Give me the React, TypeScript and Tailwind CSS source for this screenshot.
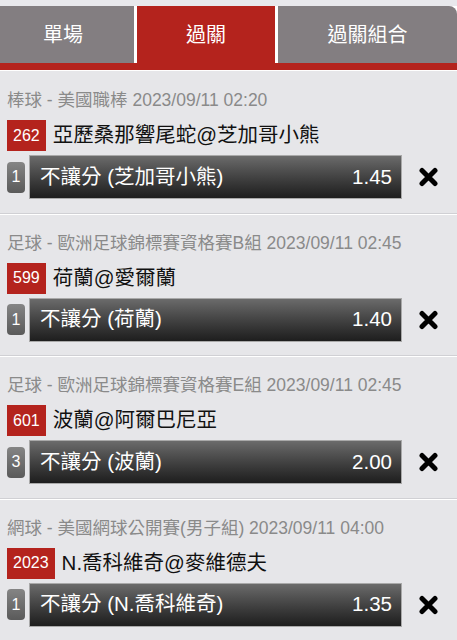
const font = { fontFamily: '"Liberation Sans", "Noto Sans CJK TC", sans-serif' };

const bets = [
  { league: "棒球 - 美國職棒 2023/09/11 02:20", code: "262", match: "亞歷桑那響尾蛇@芝加哥小熊", count: "1", pick: "不讓分 (芝加哥小熊)", odds: "1.45" },
  { league: "足球 - 歐洲足球錦標賽資格賽B組 2023/09/11 02:45", code: "599", match: "荷蘭@愛爾蘭", count: "1", pick: "不讓分 (荷蘭)", odds: "1.40" },
  { league: "足球 - 歐洲足球錦標賽資格賽E組 2023/09/11 02:45", code: "601", match: "波蘭@阿爾巴尼亞", count: "3", pick: "不讓分 (波蘭)", odds: "2.00" },
  { league: "網球 - 美國網球公開賽(男子組) 2023/09/11 04:00", code: "2023", match: "N.喬科維奇@麥維德夫", count: "1", pick: "不讓分 (N.喬科維奇)", odds: "1.35" },
];

function CloseIcon() {
  return (
    <svg width="21" height="20" viewBox="0 0 21 20">
      <path d="M4 3.5 L17 16.5 M17 3.5 L4 16.5" stroke="#000" strokeWidth="5" strokeLinecap="round" />
    </svg>
  );
}

function BetItem({ bet }: { bet: (typeof bets)[number] }) {
  return (
    <div className="pt-[19px] pb-[13.6px] pl-[7px] border-b border-[#d0d0d4] shadow-[0_1px_0_#ffffff]">
      <div className="h-[20px] leading-[20px] text-[17.5px] text-[#8a8a8a] whitespace-nowrap">{bet.league}</div>
      <div className="mt-[10px] flex items-center gap-[7px] h-[31px]">
        <div className="h-[31px] flex items-center px-[6px] bg-[#b4231d] text-white text-[16px]">{bet.code}</div>
        <div className="text-[20.5px] text-[#111]">{bet.match}</div>
      </div>
      <div className="mt-[4px] flex items-center h-[44px]">
        <div className="w-[18px] h-[31px] rounded-[4px] bg-gradient-to-b from-[#858585] to-[#5a5a5a] text-white text-[16px] flex items-center justify-center">
          {bet.count}
        </div>
        <div className="ml-[4px] w-[373px] h-[44px] border border-[#a9a9a9] bg-gradient-to-b from-[#6b6b6b] to-[#1e1e1e] flex items-center justify-between pl-[10px] pr-[9px] text-white text-[20.5px]">
          <span>{bet.pick}</span>
          <span>{bet.odds}</span>
        </div>
        <div className="ml-[16px] flex items-center">
          <CloseIcon />
        </div>
      </div>
    </div>
  );
}

export default function App() {
  return (
    <div className="w-[457px] h-[640px] overflow-hidden bg-[#e6e6e9]" style={font}>
      <div className="pt-[6px] bg-[#e8e8ec]">
        <div className="flex h-[57px] gap-[3px] bg-white">
          <div className="w-[134px] bg-[#837e81] text-white text-[20px] flex items-center justify-center pr-[8px]">單場</div>
          <div className="w-[138px] bg-[#b4231d] text-white text-[20px] flex items-center justify-center">過關</div>
          <div className="flex-1 bg-[#837e81] text-white text-[20px] flex items-center justify-center rounded-tr-[8px]">過關組合</div>
        </div>
        <div className="h-[7px] bg-[#b4231d]" />
        <div className="h-[1px] bg-white" />
      </div>
      {bets.map((bet) => (
        <BetItem key={bet.code} bet={bet} />
      ))}
    </div>
  );
}
